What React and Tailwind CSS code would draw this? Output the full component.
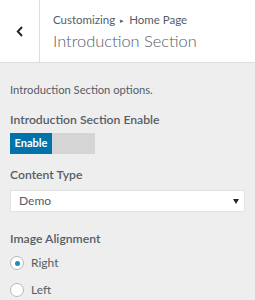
export default function App() {
  const font = { fontFamily: 'Lato, "Open Sans", sans-serif' };
  return (
    <div className="w-[255px] h-[300px] bg-[#eeeeee] overflow-hidden text-[#555d66]" style={font}>
      <div className="flex h-[63px] bg-white border-b border-[#dddddd]">
        <div className="w-[40px] shrink-0 border-r border-[#dddddd] flex items-center justify-center">
          <svg width="8" height="11" viewBox="0 0 8 11" className="mt-[1px]">
            <path d="M6 1 L1.8 5.5 L6 10" fill="none" stroke="#23282d" strokeWidth="2" />
          </svg>
        </div>
        <div className="pl-[13px] pt-[12px] flex flex-col">
          <div className="text-[11.5px] leading-[16px] flex items-center gap-[5px]">
            <span>Customizing</span>
            <span className="text-[7px]">▸</span>
            <span>Home Page</span>
          </div>
          <div className="text-[16.4px] leading-[24px] font-light mt-[1px] text-[#555d66]">Introduction Section</div>
        </div>
      </div>
      <div className="px-[10px] pt-[19px]">
        <div className="text-[11.2px] leading-[15px]">Introduction Section options.</div>
        <div className="mt-[15px] text-[12.2px] font-semibold leading-[16px]">Introduction Section Enable</div>
        <div className="mt-[5px] flex w-[85px] h-[21px]">
          <div className="w-[42px] bg-[#0073aa] text-white text-[11px] font-bold flex items-center justify-center">Enable</div>
          <div className="flex-1 bg-[#d5d5d5]"></div>
        </div>
        <div className="mt-[13px] text-[12.2px] font-semibold leading-[16px]">Content Type</div>
        <div className="mt-[7px] h-[22px] bg-white border border-[#e2e2e2] flex items-center justify-between pl-[8px] pr-[5px]">
          <span className="text-[12px]">Demo</span>
          <svg width="6" height="5" viewBox="0 0 6 5"><path d="M0 0 H6 L3 5 Z" fill="#23282d" /></svg>
        </div>
        <div className="mt-[19px] text-[12.2px] font-semibold leading-[16px]">Image Alignment</div>
        <div className="mt-[8px] flex flex-col gap-[11px]">
          <div className="flex items-center gap-[7px]">
            <div className="w-[14px] h-[14px] rounded-full bg-white border border-[#b4b9be] flex items-center justify-center">
              <div className="w-[5px] h-[5px] rounded-full bg-[#1e8cbe]"></div>
            </div>
            <span className="text-[12px] leading-[16px]">Right</span>
          </div>
          <div className="flex items-center gap-[7px]">
            <div className="w-[14px] h-[14px] rounded-full bg-white border border-[#b4b9be]"></div>
            <span className="text-[12px] leading-[16px]">Left</span>
          </div>
        </div>
      </div>
    </div>
  );
}
